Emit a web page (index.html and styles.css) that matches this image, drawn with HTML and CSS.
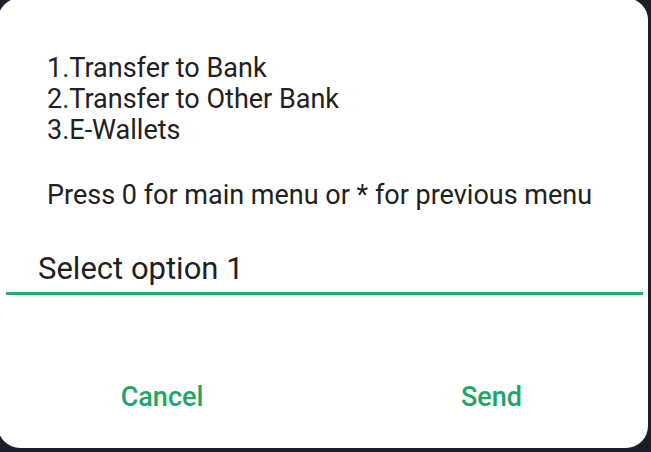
FILE: index.html
```html
<!DOCTYPE html>
<html>
<head>
<meta charset="utf-8">
<link rel="stylesheet" href="styles.css">
</head>
<body>
<div class="dialog">
  <div class="message">
    <div class="line">1.Transfer to Bank</div>
    <div class="line">2.Transfer to Other Bank</div>
    <div class="line">3.E-Wallets</div>
    <div class="line">&nbsp;</div>
    <div class="line prompt">Press 0 for main menu or * for previous menu</div>
  </div>
  <div class="field">
    <div class="input">Select option 1</div>
  </div>
  <div class="actions">
    <div class="btn">Cancel</div>
    <div class="btn">Send</div>
  </div>
</div>
</body>
</html>
```
FILE: styles.css
```css
html, body {
  margin: 0;
  padding: 0;
  width: 651px;
  height: 452px;
  overflow: hidden;
  background: #1c1e2c;
}
body {
  font-family: Roboto, "Noto Sans", sans-serif;
}
.dialog {
  box-sizing: border-box;
  width: 650px;
  height: 450px;
  margin: -2px 0 0 -2px;
  background: #ffffff;
  border-radius: 22px;
  display: flex;
  flex-direction: column;
  padding-top: 55px;
}
.message {
  padding-left: 49px;
  color: #212121;
  font-size: 27px;
  line-height: 31px;
}
.prompt {
  margin-top: 3px;
}
.field {
  margin-top: 40px;
  padding: 0 5px 0 8px;
}
.input {
  font-size: 31px;
  color: #212121;
  line-height: 36px;
  padding-left: 32px;
  padding-bottom: 5px;
  border-bottom: 3px solid #22ad6c;
}
.actions {
  display: grid;
  grid-template-columns: 328px 322px;
  margin-top: 86px;
}
.btn {
  color: #1fa566;
  font-size: 27px;
  font-weight: 500;
  line-height: 32px;
}
.btn:first-child {
  text-align: center;
}
.btn:last-child {
  padding-left: 135px;
}
```
